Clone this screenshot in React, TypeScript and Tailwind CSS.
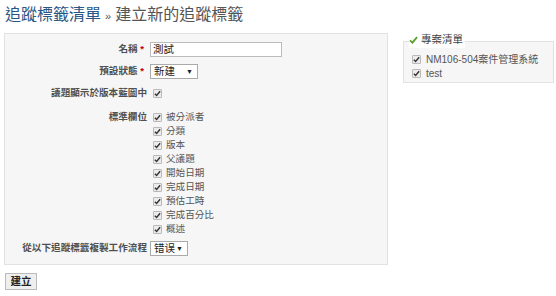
import React from "react";

const font = { fontFamily: '"Liberation Sans", "Noto Sans CJK TC", sans-serif' };

function Box({ className = "" }: { className?: string }) {
  return (
    <span
      className={`inline-flex items-center justify-center w-[9px] h-[9px] border border-[#b9b9b9] bg-[#ececec] rounded-[1px] shrink-0 ${className}`}
    >
      <svg width="7" height="7" viewBox="0 0 8 8">
        <path d="M1 4.3 L3 6.3 L7 1.5" fill="none" stroke="#333" strokeWidth="1.6" />
      </svg>
    </span>
  );
}

function Select({ text, w }: { text: string; w: string }) {
  return (
    <div
      className={`${w} h-full border border-[#aaa] bg-white flex items-center justify-between pl-[3px] pr-[4px] text-[10.5px] text-[#222]`}
    >
      <span>{text}</span>
      <span className="text-[7px] leading-none">▼</span>
    </div>
  );
}

const fields = ["被分派者", "分類", "版本", "父議題", "開始日期", "完成日期", "預估工時", "完成百分比", "概述"];

export default function App() {
  return (
    <div className="w-[556px] h-[296px] bg-white flex" style={font}>
      <div className="w-[388px] pl-[4px] flex flex-col">
        <h2 className="h-[33px] shrink-0 pt-[5px] pl-[1px] text-[16px] leading-[20px] text-[#555] font-normal whitespace-nowrap">
          <span className="text-[#2a5685]">追蹤標籤清單</span>
          <span className="text-[11px] mx-[4px]">»</span>
          建立新的追蹤標籤
        </h2>
        <div className="border border-[#e2e2e2] bg-[#f6f6f6] h-[232px] shrink-0 pt-[8px] flex flex-col text-[9.6px] text-[#505050]">
          <div className="flex h-[15px] items-center">
            <div className="w-[142px] text-right font-bold pr-[3px]">
              名稱 <span className="text-[#bb0000]">*</span>
            </div>
            <div className="ml-[3px] w-[132px] h-full border border-[#bbb] bg-white px-[2px] text-[10.5px] text-[#222] leading-[13px]">
              測試
            </div>
          </div>
          <div className="flex h-[15px] items-center mt-[7px]">
            <div className="w-[142px] text-right font-bold pr-[3px]">
              預設狀態 <span className="text-[#bb0000]">*</span>
            </div>
            <div className="ml-[3px] h-full">
              <Select text="新建" w="w-[48px]" />
            </div>
          </div>
          <div className="flex h-[12px] items-center mt-[8px]">
            <div className="w-[142px] text-right font-bold">議題顯示於版本藍圖中</div>
            <Box className="ml-[6px]" />
          </div>
          <div className="flex mt-[11px]">
            <div className="w-[142px] text-right font-bold h-[14px] leading-[14px]">標準欄位</div>
            <div className="flex flex-col ml-[6px]">
              {fields.map((f) => (
                <div key={f} className="flex items-center h-[14px]">
                  <Box />
                  <span className="ml-[4px] text-[#555]">{f}</span>
                </div>
              ))}
            </div>
          </div>
          <div className="flex h-[15px] items-center mt-[5px]">
            <div className="w-[142px] text-right font-bold">從以下追蹤標籤複製工作流程</div>
            <div className="ml-[3px] h-full">
              <Select text="错误" w="w-[38px]" />
            </div>
          </div>
        </div>
        <div className="mt-[8px] ml-[1px] flex">
          <button className="w-[32px] h-[17px] border border-[#bbb] bg-[#efefef] text-[10.5px] font-bold text-[#222] leading-none">
            建立
          </button>
        </div>
      </div>
      <div className="ml-[15px] w-[151px] pt-[33px] relative">
        <div className="absolute top-[32px] left-[6px] flex items-center bg-white pr-[2px] z-10">
          <svg width="9" height="8" viewBox="0 0 10 9">
            <path d="M1 4.8 L3.8 7.5 L9 1.2" fill="none" stroke="#5aa02c" strokeWidth="2" />
          </svg>
          <span className="ml-[3px] text-[10.5px] text-[#444]">專案清單</span>
        </div>
        <div className="mt-[8px] h-[42px] border border-[#e2e2e2] bg-[#f6f6f6] pt-[10px] pl-[8px] text-[10px] text-[#555]">
          <div className="flex items-center h-[14px]">
            <Box />
            <span className="ml-[5px]">NM106-504案件管理系統</span>
          </div>
          <div className="flex items-center h-[14px]">
            <Box />
            <span className="ml-[5px]">test</span>
          </div>
        </div>
      </div>
    </div>
  );
}
